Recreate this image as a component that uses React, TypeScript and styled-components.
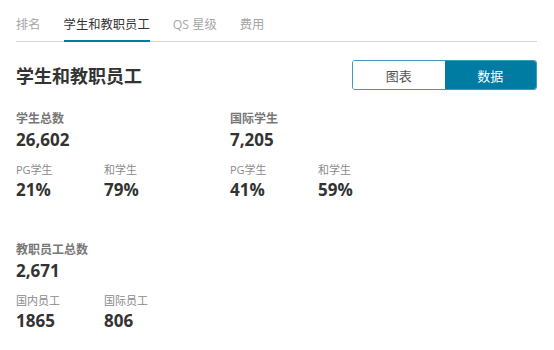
import styled, { createGlobalStyle } from "styled-components";

const GlobalStyle = createGlobalStyle`
  body {
    margin: 0;
    background: #fff;
    font-family: "Open Sans", "Noto Sans CJK SC", sans-serif;
    color: #333;
  }
`;

const Page = styled.div`
  width: 554px;
  padding: 0 17px 0 16px;
  box-sizing: border-box;
`;

const Tabs = styled.div`
  display: flex;
  gap: 23px;
  border-bottom: 1px solid #d6d6d6;
  padding-top: 15px;
`;

const Tab = styled.div<{ $active?: boolean }>`
  font-size: 12.3px;
  line-height: 20px;
  padding-bottom: 5px;
  margin-bottom: -1px;
  color: ${({ $active }) => ($active ? "#333" : "#a6a6a6")};
  border-bottom: 2px solid ${({ $active }) => ($active ? "#007ba1" : "transparent")};
`;

const Header = styled.div`
  display: flex;
  align-items: center;
  justify-content: space-between;
  margin-top: 18px;
`;

const Title = styled.h2`
  margin: 0;
  font-size: 18px;
  font-weight: 700;
  color: #333;
`;

const Toggle = styled.div`
  display: flex;
  width: 185px;
  height: 30px;
  border: 1px solid #3e9bb8;
  border-radius: 3px;
  overflow: hidden;
  box-sizing: border-box;
`;

const ToggleButton = styled.button<{ $active?: boolean }>`
  flex: 1;
  border: none;
  margin: 0;
  font-family: inherit;
  font-size: 13px;
  background: ${({ $active }) => ($active ? "#007ba1" : "#fff")};
  color: ${({ $active }) => ($active ? "#fff" : "#555")};
`;

const Group = styled.div`
  display: grid;
  grid-template-columns: 214px 214px;
  margin-top: 20px;
`;

const StaffGroup = styled(Group)`
  margin-top: 39px;
`;

const Block = styled.div`
  display: flex;
  flex-direction: column;
`;

const Label = styled.div`
  font-size: 12px;
  font-weight: 600;
  color: #777;
  line-height: 18px;
`;

const Value = styled.div`
  font-size: 17px;
  font-weight: 700;
  color: #333;
  line-height: 24px;
`;

const SubRow = styled.div`
  display: grid;
  grid-template-columns: 88px 88px;
  margin-top: 10px;
`;

const SubLabel = styled.div`
  font-size: 11px;
  color: #8a8a8a;
  line-height: 16px;
`;

type Stat = { label: string; value: string };

function StatBlock({ label, value, subs }: { label: string; value: string; subs: Stat[] }) {
  return (
    <Block>
      <Label>{label}</Label>
      <Value>{value}</Value>
      <SubRow>
        {subs.map((s) => (
          <Block key={s.label}>
            <SubLabel>{s.label}</SubLabel>
            <Value>{s.value}</Value>
          </Block>
        ))}
      </SubRow>
    </Block>
  );
}

export default function App() {
  return (
    <Page>
      <GlobalStyle />
      <Tabs>
        <Tab>排名</Tab>
        <Tab $active>学生和教职员工</Tab>
        <Tab>QS 星级</Tab>
        <Tab>费用</Tab>
      </Tabs>
      <Header>
        <Title>学生和教职员工</Title>
        <Toggle>
          <ToggleButton>图表</ToggleButton>
          <ToggleButton $active>数据</ToggleButton>
        </Toggle>
      </Header>
      <Group>
        <StatBlock
          label="学生总数"
          value="26,602"
          subs={[
            { label: "PG学生", value: "21%" },
            { label: "和学生", value: "79%" },
          ]}
        />
        <StatBlock
          label="国际学生"
          value="7,205"
          subs={[
            { label: "PG学生", value: "41%" },
            { label: "和学生", value: "59%" },
          ]}
        />
      </Group>
      <StaffGroup>
        <StatBlock
          label="教职员工总数"
          value="2,671"
          subs={[
            { label: "国内员工", value: "1865" },
            { label: "国际员工", value: "806" },
          ]}
        />
      </StaffGroup>
    </Page>
  );
}
